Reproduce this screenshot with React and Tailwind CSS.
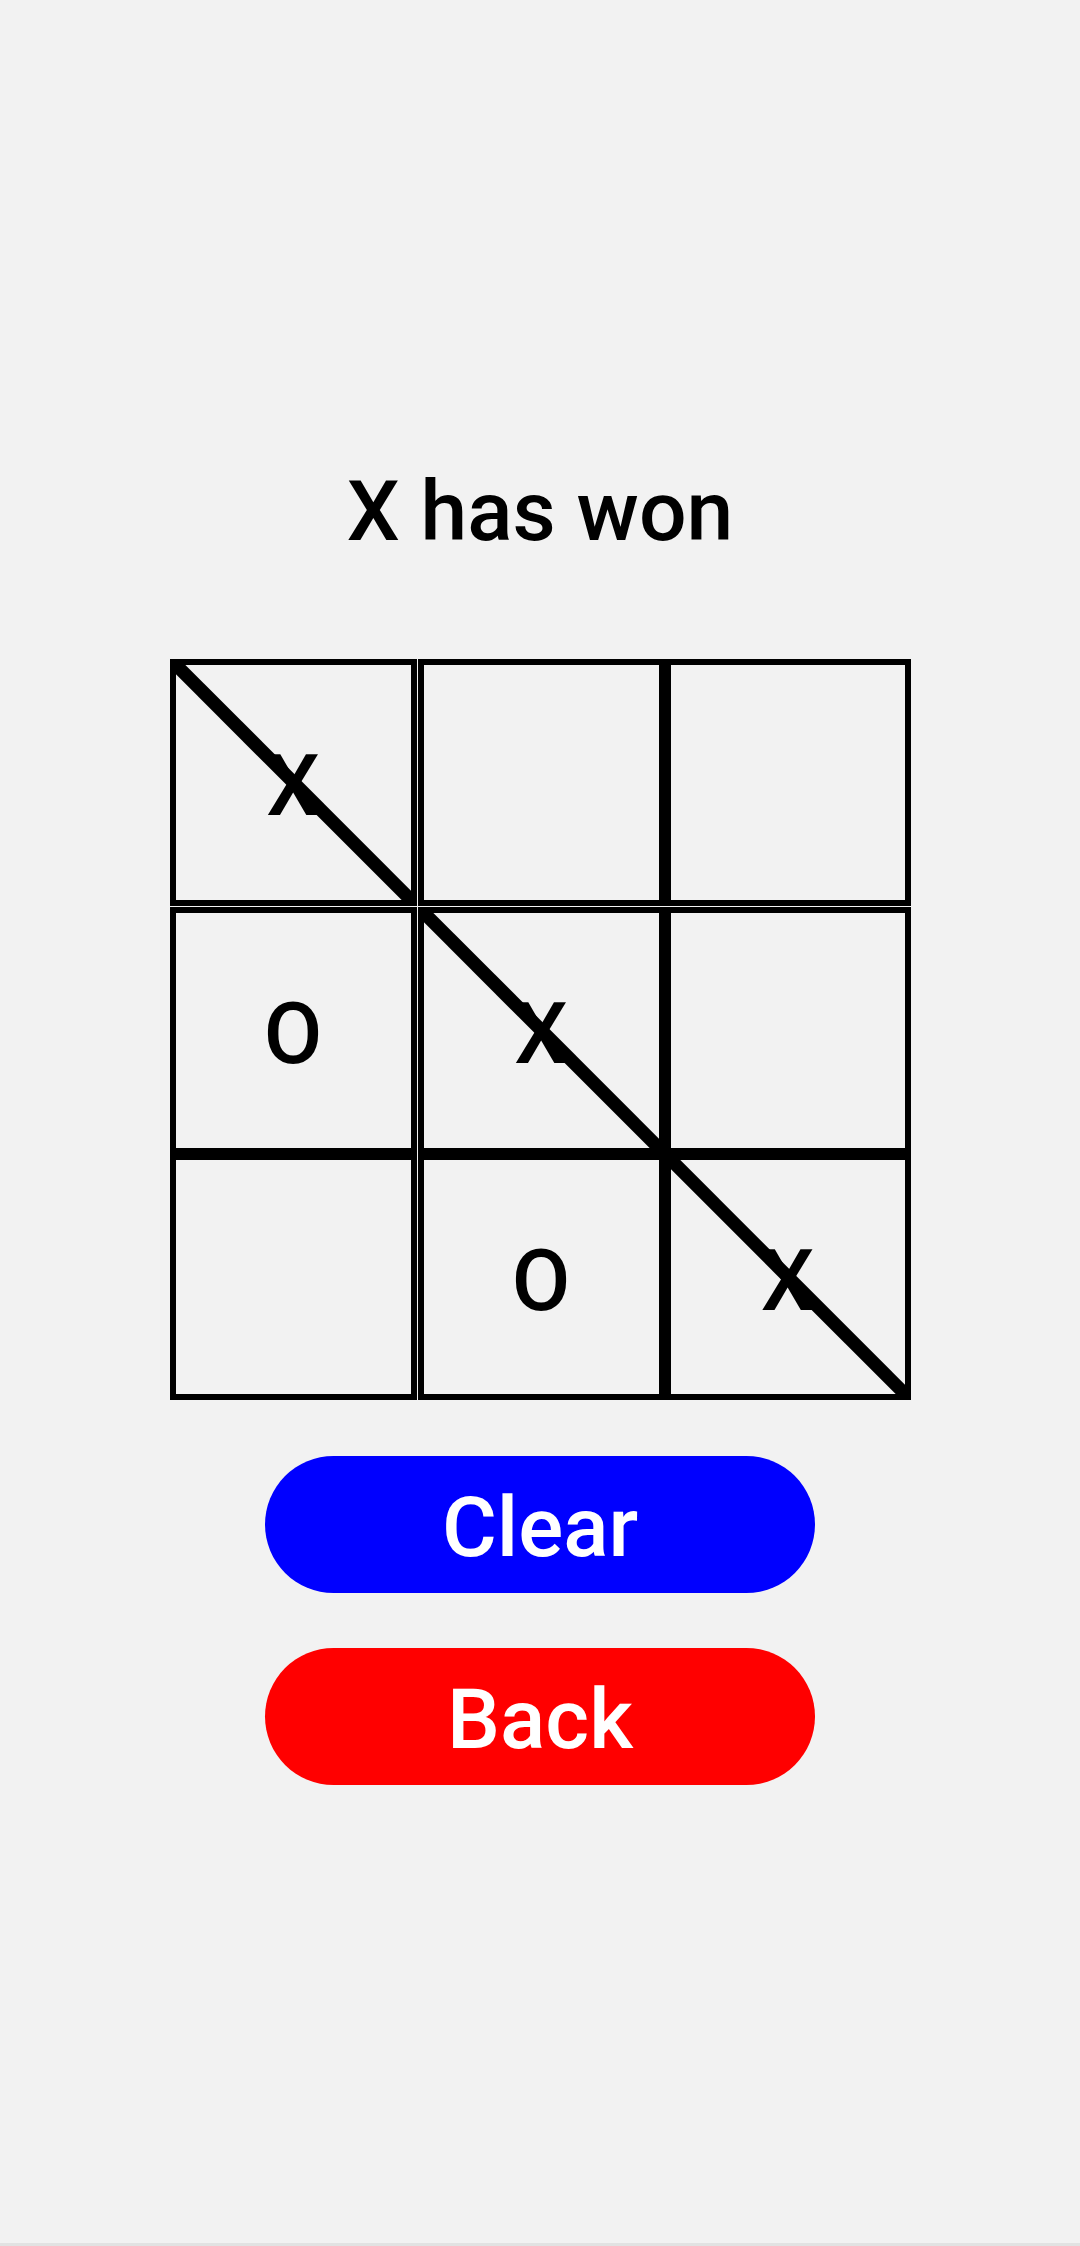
import { useState } from "react";

const WIN = [0, 4, 8];

function Cell({ value, index }) {
  const col = index % 3;
  const row = Math.floor(index / 3);
  return (
    <div
      className={
        "relative flex items-center justify-center border-[6px] border-black pt-2 " +
        (col === 1 ? "ml-px " : "") +
        (row === 1 ? "mt-px " : "")
      }
    >
      <span className="text-[85px] font-medium leading-none text-black">{value}</span>
      {WIN.includes(index) && (
        <svg
          className="absolute -top-[6px] -left-[6px] h-[calc(100%_+_12px)] w-[calc(100%_+_12px)]"
          viewBox="0 0 100 100"
          preserveAspectRatio="none"
        >
          <polygon points="0.6,0.6 4.4,0.6 99.4,95.6 99.4,99.4 95.6,99.4 0.6,4.4" fill="black" />
        </svg>
      )}
    </div>
  );
}

export default function App() {
  const [board] = useState(["X", "", "", "O", "X", "", "", "O", "X"]);

  return (
    <div
      className="flex h-[2246px] flex-col items-center border-b-[3px] border-[#e2e2e2] bg-[#f2f2f2] pt-[470px]"
      style={{ fontFamily: "Roboto, 'Noto Sans', sans-serif" }}
    >
      <h1 className="text-[84px] font-medium leading-none text-black">X has won</h1>

      <div className="mt-[105px] grid grid-cols-[247px_248px_246px] grid-rows-[247px_248px_246px]">
        {board.map((v, i) => (
          <Cell key={i} value={v} index={i} />
        ))}
      </div>

      <button className="mt-[56px] flex h-[137px] w-[550px] items-center justify-center rounded-full bg-[#0000ff] pt-1.5 text-[84px] font-medium leading-none text-white">
        Clear
      </button>
      <button className="mt-[55px] flex h-[137px] w-[550px] items-center justify-center rounded-full bg-[#ff0000] pt-1.5 text-[84px] font-medium leading-none text-white">
        Back
      </button>
    </div>
  );
}
